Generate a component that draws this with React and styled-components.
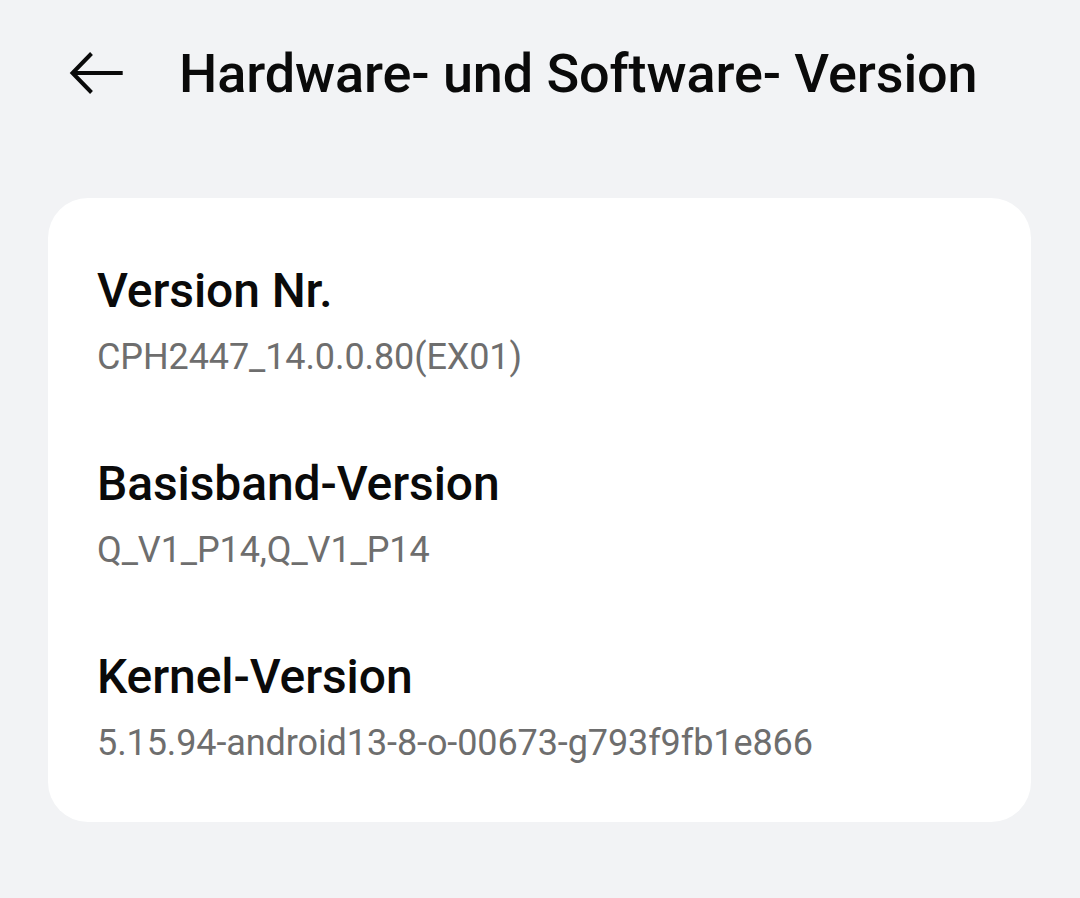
import React from 'react';
import styled, { createGlobalStyle } from 'styled-components';

const GlobalStyle = createGlobalStyle`
	html, body {
		margin: 0;
		padding: 0;
		background: #f2f3f5;
	}
	body {
		font-family: Roboto, 'Liberation Sans', sans-serif;
		-webkit-font-smoothing: antialiased;
	}
`;

const Screen = styled.div`
	width: 1080px;
	height: 898px;
	background: #f2f3f5;
	overflow: hidden;
`;

const Toolbar = styled.div`
	display: flex;
	align-items: center;
	height: 150px;
	padding-left: 68px;
	box-sizing: border-box;
`;

const BackButton = styled.button`
	display: flex;
	align-items: center;
	justify-content: center;
	width: 56px;
	height: 56px;
	padding: 0;
	margin: 0 55px 5px 0;
	border: none;
	background: none;
	color: #0a0a0a;
	cursor: pointer;
`;

const Title = styled.h1`
	margin: 0 0 2px;
	font-size: 54px;
	font-weight: 500;
	line-height: 64px;
	letter-spacing: -0.1px;
	color: #0a0a0a;
	white-space: nowrap;
`;

const Card = styled.div`
	margin: 48px 49px 0 48px;
	background: #fff;
	border-radius: 40px;
	padding: 65px 49px 57px;
	display: flex;
	flex-direction: column;
	gap: 77px;
`;

const Row = styled.div`
	display: flex;
	flex-direction: column;
	gap: 16px;
`;

const Label = styled.div`
	font-size: 48px;
	font-weight: 500;
	line-height: 56px;
	letter-spacing: -0.1px;
	color: #0a0a0a;
`;

const Value = styled.div`
	font-size: 36px;
	font-weight: 400;
	line-height: 44px;
	letter-spacing: -0.1px;
	color: #6e6e6e;
`;

function BackArrow() {
	return (
		<svg width="56" height="56" viewBox="0 0 56 56" fill="none">
			<path
				d="M54.7 28H4.5M23.5 8.5L4.5 28l19 19.5"
				stroke="currentColor"
				strokeWidth="4"
				strokeLinecap="butt"
				strokeLinejoin="miter"
			/>
		</svg>
	);
}

const items = [
	{ label: 'Version Nr.', value: 'CPH2447_14.0.0.80(EX01)' },
	{ label: 'Basisband-Version', value: 'Q_V1_P14,Q_V1_P14' },
	{ label: 'Kernel-Version', value: '5.15.94-android13-8-o-00673-g793f9fb1e866' },
];

export default function App() {
	return (
		<Screen>
			<GlobalStyle />
			<Toolbar>
				<BackButton aria-label="Zurück">
					<BackArrow />
				</BackButton>
				<Title>Hardware- und Software- Version</Title>
			</Toolbar>
			<Card>
				{items.map((item) => (
					<Row key={item.label}>
						<Label>{item.label}</Label>
						<Value>{item.value}</Value>
					</Row>
				))}
			</Card>
		</Screen>
	);
}
